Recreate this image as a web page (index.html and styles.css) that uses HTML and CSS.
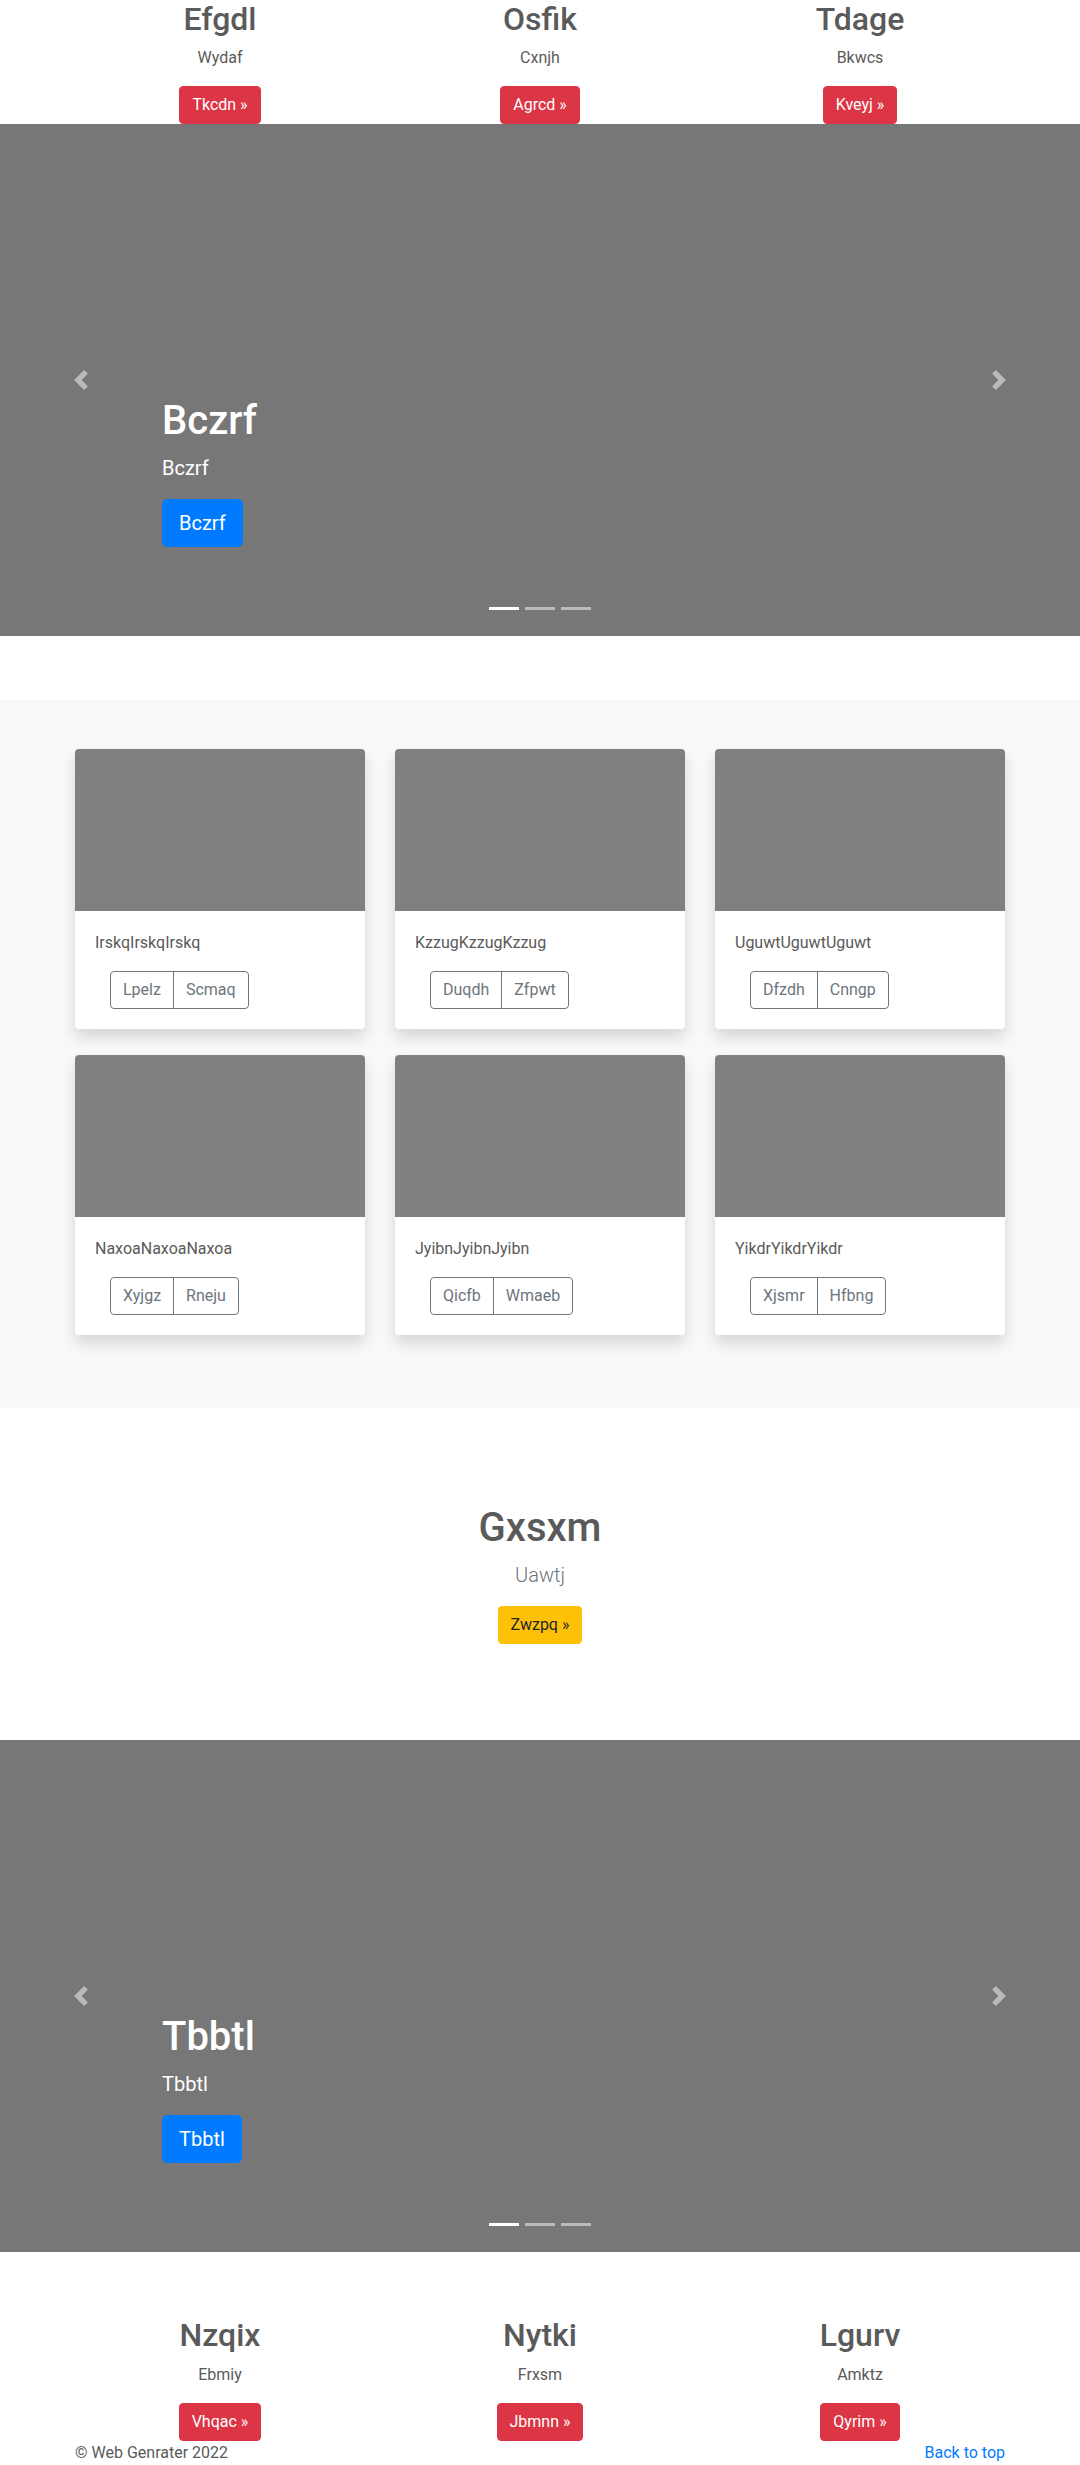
FILE: index.html
```html
<!DOCTYPE html>
<html lang="en">
<head>
<meta charset="utf-8">
<title>Web Genrater</title>
<link rel="stylesheet" href="styles.css">
</head>
<body>
<section class="marketing">
  <div class="container grid3">
    <div class="mcol">
      <h2>Efgdl</h2>
      <p>Wydaf</p>
      <a class="btn btn-danger" href="#">Tkcdn &raquo;</a>
    </div>
    <div class="mcol">
      <h2>Osfik</h2>
      <p>Cxnjh</p>
      <a class="btn btn-danger" href="#">Agrcd &raquo;</a>
    </div>
    <div class="mcol">
      <h2>Tdage</h2>
      <p>Bkwcs</p>
      <a class="btn btn-danger" href="#">Kveyj &raquo;</a>
    </div>
  </div>
</section>

<div class="carousel">
  <div class="indicators"><span class="active"></span><span></span><span></span></div>
  <div class="caption">
    <h1>Bczrf</h1>
    <p>Bczrf</p>
    <div class="cap-btn"><a class="btn btn-lg btn-primary" href="#">Bczrf</a></div>
  </div>
  <a class="control prev" href="#"><svg viewBox="0 0 8 8" width="20" height="20"><path fill="#fff" d="M5.25 0l-4 4 4 4 1.5-1.5L4.25 4l2.5-2.5L5.25 0z"/></svg></a>
  <a class="control next" href="#"><svg viewBox="0 0 8 8" width="20" height="20"><path fill="#fff" d="M2.75 0l-1.5 1.5L3.75 4l-2.5 2.5L2.75 8l4-4-4-4z"/></svg></a>
</div>

<section class="album">
  <div class="container grid3 cards">
    <div class="card"><div class="card-img"></div><div class="card-body"><p>IrskqIrskqIrskq</p><div class="btn-group"><a class="btn btn-outline" href="#">Lpelz</a><a class="btn btn-outline" href="#">Scmaq</a></div></div></div>
    <div class="card"><div class="card-img"></div><div class="card-body"><p>KzzugKzzugKzzug</p><div class="btn-group"><a class="btn btn-outline" href="#">Duqdh</a><a class="btn btn-outline" href="#">Zfpwt</a></div></div></div>
    <div class="card"><div class="card-img"></div><div class="card-body"><p>UguwtUguwtUguwt</p><div class="btn-group"><a class="btn btn-outline" href="#">Dfzdh</a><a class="btn btn-outline" href="#">Cnngp</a></div></div></div>
    <div class="card"><div class="card-img"></div><div class="card-body"><p>NaxoaNaxoaNaxoa</p><div class="btn-group"><a class="btn btn-outline" href="#">Xyjgz</a><a class="btn btn-outline" href="#">Rneju</a></div></div></div>
    <div class="card"><div class="card-img"></div><div class="card-body"><p>JyibnJyibnJyibn</p><div class="btn-group"><a class="btn btn-outline" href="#">Qicfb</a><a class="btn btn-outline" href="#">Wmaeb</a></div></div></div>
    <div class="card"><div class="card-img"></div><div class="card-body"><p>YikdrYikdrYikdr</p><div class="btn-group"><a class="btn btn-outline" href="#">Xjsmr</a><a class="btn btn-outline" href="#">Hfbng</a></div></div></div>
  </div>
</section>

<section class="hero">
  <h1>Gxsxm</h1>
  <p class="lead">Uawtj</p>
  <a class="btn btn-warning" href="#">Zwzpq &raquo;</a>
</section>

<div class="carousel">
  <div class="indicators"><span class="active"></span><span></span><span></span></div>
  <div class="caption">
    <h1>Tbbtl</h1>
    <p>Tbbtl</p>
    <div class="cap-btn"><a class="btn btn-lg btn-primary" href="#">Tbbtl</a></div>
  </div>
  <a class="control prev" href="#"><svg viewBox="0 0 8 8" width="20" height="20"><path fill="#fff" d="M5.25 0l-4 4 4 4 1.5-1.5L4.25 4l2.5-2.5L5.25 0z"/></svg></a>
  <a class="control next" href="#"><svg viewBox="0 0 8 8" width="20" height="20"><path fill="#fff" d="M2.75 0l-1.5 1.5L3.75 4l-2.5 2.5L2.75 8l4-4-4-4z"/></svg></a>
</div>

<section class="marketing">
  <div class="container grid3">
    <div class="mcol">
      <h2>Nzqix</h2>
      <p>Ebmiy</p>
      <a class="btn btn-danger" href="#">Vhqac &raquo;</a>
    </div>
    <div class="mcol">
      <h2>Nytki</h2>
      <p>Frxsm</p>
      <a class="btn btn-danger" href="#">Jbmnn &raquo;</a>
    </div>
    <div class="mcol">
      <h2>Lgurv</h2>
      <p>Amktz</p>
      <a class="btn btn-danger" href="#">Qyrim &raquo;</a>
    </div>
  </div>
</section>

<footer class="container footer">
  <p>&copy; Web Genrater 2022</p>
  <p><a href="#" class="top-link">Back to top</a></p>
</footer>
</body>
</html>
```

FILE: styles.css
```css
* { box-sizing: border-box; }

body {
  margin: 0;
  font-family: "Segoe UI", Roboto, "Noto Sans", sans-serif;
  font-size: 16px;
  line-height: 1.5;
  color: #5a5a5a;
  background: #fff;
}

.container {
  width: 960px;
  margin: 0 auto;
  padding: 0 15px;
}

.grid3 {
  display: grid;
  grid-template-columns: repeat(3, 1fr);
  column-gap: 30px;
}

/* marketing */
.mcol {
  text-align: center;
}
.mcol h2 {
  font-size: 32px;
  font-weight: 500;
  line-height: 1.2;
  margin: 0 0 8px;
}
.mcol p {
  margin: 0 12px 16px;
}

/* buttons */
.btn {
  display: inline-block;
  font-size: 16px;
  line-height: 1.5;
  padding: 6px 12px;
  border: 1px solid transparent;
  border-radius: 4px;
  text-decoration: none;
  font-weight: 400;
}
.btn-danger { background: #dc3545; border-color: #dc3545; color: #fff; }
.btn-primary { background: #007bff; border-color: #007bff; color: #fff; }
.btn-warning { background: #ffc107; border-color: #ffc107; color: #212529; }
.btn-lg {
  font-size: 20px;
  padding: 8px 16px;
  border-radius: 5px;
}
.btn-outline {
  color: #6c757d;
  border-color: #6c757d;
  background: transparent;
}

/* carousel */
.carousel {
  position: relative;
  height: 512px;
  background: #777;
  margin-bottom: 64px;
}
.caption {
  position: absolute;
  left: 15%;
  right: 15%;
  bottom: 48px;
  padding: 20px 0;
  color: #fff;
  text-align: left;
  z-index: 10;
}
.caption h1 {
  font-size: 40px;
  font-weight: 500;
  line-height: 1.2;
  margin: 0 0 8px;
}
.caption p {
  font-size: 20px;
  line-height: 1.5;
  margin: 0 0 16px;
}
.cap-btn {
  display: flex;
  margin-bottom: 21px;
}
.indicators {
  position: absolute;
  left: 0;
  right: 0;
  bottom: 26px;
  display: flex;
  justify-content: center;
  gap: 6px;
  z-index: 15;
}
.indicators span {
  width: 30px;
  height: 3px;
  background: #fff;
  opacity: .5;
}
.indicators span.active { opacity: 1; }
.control {
  position: absolute;
  top: 0;
  bottom: 0;
  width: 15%;
  display: flex;
  align-items: center;
  justify-content: center;
  opacity: .5;
}
.control.prev { left: 0; }
.control.next { right: 0; }
.control svg { display: block; }

/* album */
.album {
  background: #f8f9fa;
  padding: 49px 0 73px;
}
.cards { row-gap: 26px; }
.card {
  background: #fff;
  border-radius: 4px;
  overflow: hidden;
  box-shadow: 0 8px 16px rgba(0, 0, 0, .15);
}
.card-img {
  height: 162px;
  background: #808080;
}
.card-body {
  padding: 20px;
}
.card-body p {
  margin: 0 0 16px;
}
.btn-group {
  display: inline-flex;
  margin-left: 15px;
}
.btn-group .btn:first-child {
  border-top-right-radius: 0;
  border-bottom-right-radius: 0;
}
.btn-group .btn:last-child {
  border-top-left-radius: 0;
  border-bottom-left-radius: 0;
  margin-left: -1px;
}

/* hero */
.hero {
  text-align: center;
  padding: 96px 0;
}
.hero h1 {
  font-size: 40px;
  font-weight: 500;
  line-height: 1.2;
  margin: 0 0 8px;
}
.hero .lead {
  font-size: 20px;
  font-weight: 300;
  color: #6c757d;
  margin: 0 0 16px;
}

/* footer */
.footer {
  display: flex;
  justify-content: space-between;
}
.footer p { margin: 0 0 16px; }
.top-link { color: #007bff; text-decoration: none; }
```
